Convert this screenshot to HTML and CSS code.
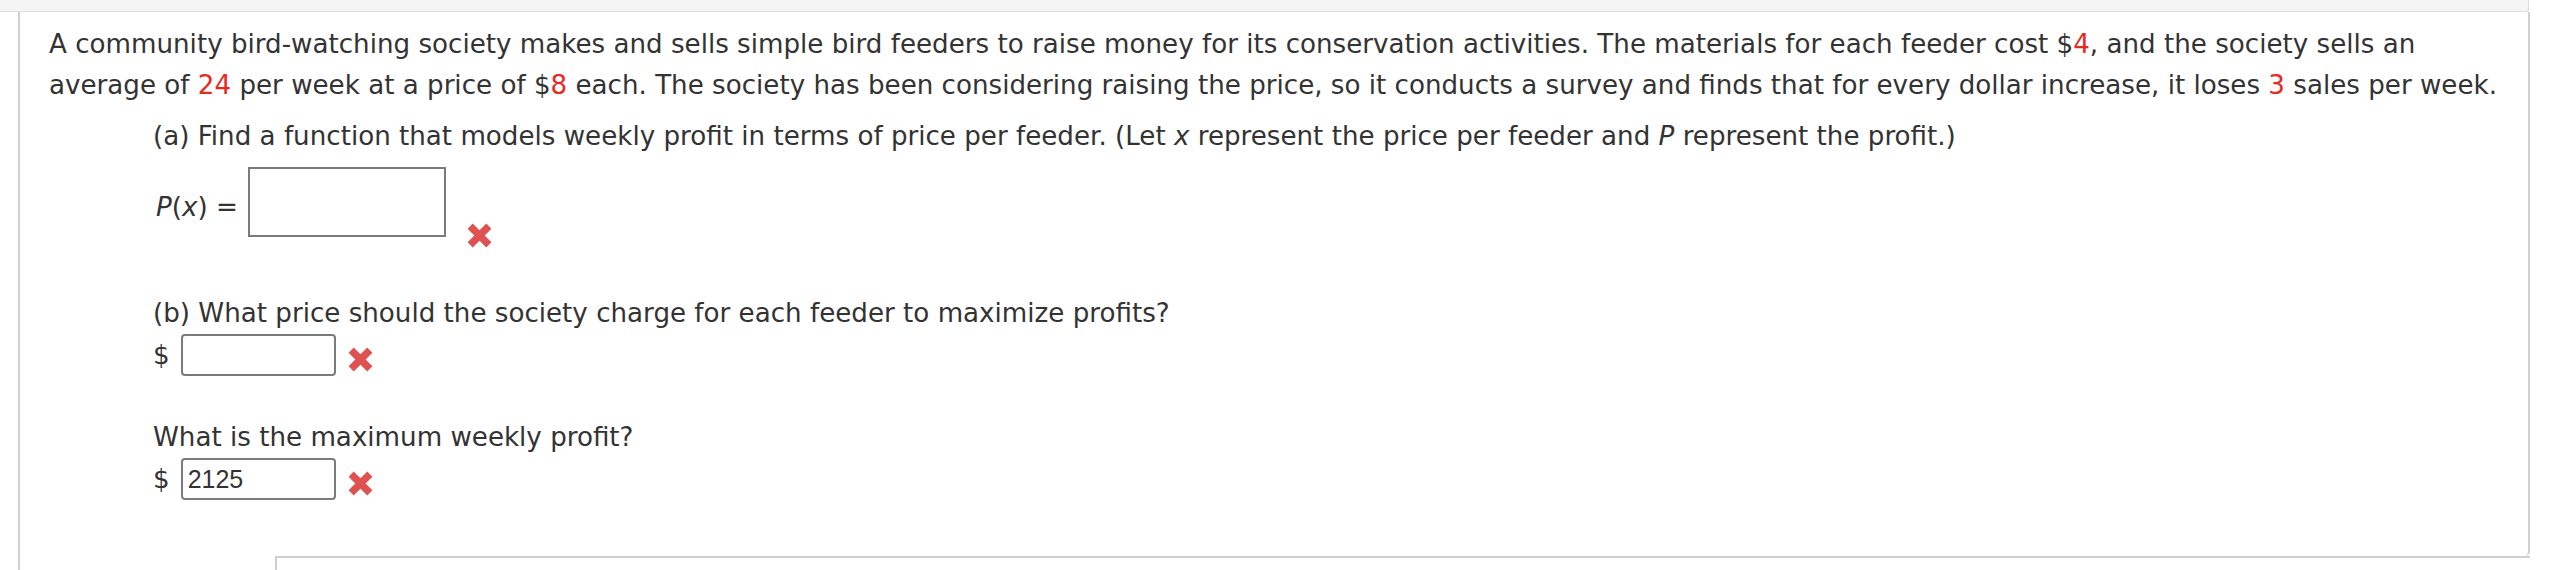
FILE: index.html
```html
<!DOCTYPE html>
<html lang="en">
<head>
<meta charset="utf-8">
<title>Bird feeder profit</title>
<link rel="stylesheet" href="styles.css">
</head>
<body>
<div class="topbar"></div>
<div class="question">
  <div class="qbody">
    <p class="stem">A community bird-watching society makes and sells simple bird feeders to raise money for its conservation activities. The materials for each feeder cost $<span class="num">4</span>, and the society sells an average of <span class="num">24</span> per week at a price of $<span class="num">8</span> each. The society has been considering raising the price, so it conducts a survey and finds that for every dollar increase, it loses <span class="num">3</span> sales per week.</p>
    <div class="parts">
      <p class="prompt">(a) Find a function that models weekly profit in terms of price per feeder. (Let <i>x</i> represent the price per feeder and <i>P</i> represent the profit.)</p>
      <div class="row row-func">
        <span class="label"><i>P</i>(<i>x</i>) =</span>
        <span class="box box-lg"></span>
        <svg class="xmark xmark-func" viewBox="0 0 26 26" aria-hidden="true"><path d="M4 4 L22 22 M22 4 L4 22"/></svg>
      </div>
      <p class="prompt prompt-b">(b) What price should the society charge for each feeder to maximize profits?</p>
      <div class="row">
        <span class="cur">$</span>
        <span class="box box-sm"></span>
        <svg class="xmark" viewBox="0 0 26 26" aria-hidden="true"><path d="M4 4 L22 22 M22 4 L4 22"/></svg>
      </div>
      <p class="prompt prompt-c">What is the maximum weekly profit?</p>
      <div class="row">
        <span class="cur">$</span>
        <span class="box box-sm"><span class="val">2125</span></span>
        <svg class="xmark" viewBox="0 0 26 26" aria-hidden="true"><path d="M4 4 L22 22 M22 4 L4 22"/></svg>
      </div>
    </div>
  </div>
  <div class="next"></div>
</div>
</body>
</html>
```

FILE: styles.css
```css
html, body {
  margin: 0;
  padding: 0;
  background: #ffffff;
}

body {
  font-family: "DejaVu Sans", Verdana, sans-serif;
  font-size: 26.15px;
  line-height: 41px;
  color: #333333;
  width: 2562px;
  height: 570px;
  overflow: hidden;
}

.topbar {
  width: 2528px;
  height: 11px;
  background: #f5f5f5;
  border-bottom: 1px solid #dcdcdc;
  border-right: 1px solid #dcdcdc;
  border-bottom-right-radius: 3px;
}

.question {
  margin-left: 18px;
  width: 2512px;
  box-sizing: border-box;
  border-left: 2px solid #cfcfcf;
}

.qbody {
  padding: 12px 30px 56px 29px;
  border-right: 2px solid #cfcfcf;
  border-bottom-right-radius: 5px;
}

.stem {
  margin: 0;
}

.num {
  color: #e8291f;
}

.parts {
  padding-left: 104px;
}

.prompt {
  margin: 10px 0 0 0;
}

.prompt-b {
  margin-top: 44px;
}

.prompt-c {
  margin-top: 41px;
}

.row {
  display: flex;
  align-items: flex-start;
}

.row-func {
  margin-top: 10px;
}

.label {
  margin-top: 20px;
  padding-left: 3px;
  margin-right: 10px;
}

.cur {
  margin-top: 0;
  margin-right: 11px;
  line-height: 42px;
}

.box {
  display: block;
  box-sizing: border-box;
  border: 2px solid #7b7b7b;
  background: #ffffff;
}

.box-lg {
  width: 198px;
  height: 70px;
}

.box-sm {
  width: 155px;
  height: 42px;
  border-radius: 4px;
}

.val {
  display: block;
  padding-left: 5px;
  font-family: "Liberation Sans", Arial, sans-serif;
  font-size: 25px;
  line-height: 38px;
  color: #333333;
}

.xmark {
  width: 27px;
  height: 27px;
  margin-left: 11px;
  margin-top: 12px;
  fill: none;
  stroke: #e05252;
  stroke-width: 7;
  stroke-linecap: butt;
}

.xmark-func {
  margin-left: 20px;
  margin-top: 55px;
}

.next {
  margin-left: 255px;
  height: 40px;
  border-top: 2px solid #cfcfcf;
  border-left: 2px solid #cfcfcf;
}
```
